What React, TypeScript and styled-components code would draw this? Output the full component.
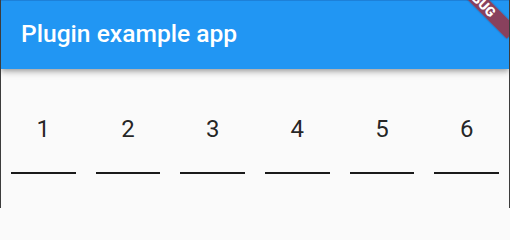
import styled, { createGlobalStyle } from "styled-components";
import type { FunctionComponent } from "react";

// Global page reset
const GlobalStyle = createGlobalStyle`
    html, body {
        margin: 0;
        padding: 0;
        background: #fafafa;
    }
    body {
        font-family: Roboto, "Noto Sans", "Liberation Sans", sans-serif;
    }
`;

// Define Styles
const Screen = styled.div`
    position: relative;
    width: 508px;
    height: 208px;
    overflow: hidden;
    border-left: 1px solid #3c3c3c;
    border-right: 1px solid #3c3c3c;
    background: #fafafa;
    display: flex;
    flex-direction: column;
`;
const AppBar = styled.header`
    position: relative;
    z-index: 1;
    flex-shrink: 0;
    height: 68px;
    border-top: 1px solid #1d80d8;
    background: #2196f3;
    box-shadow: 0 2px 4px -1px rgba(0, 0, 0, 0.2), 0 4px 5px 0 rgba(0, 0, 0, 0.14),
        0 1px 10px 0 rgba(0, 0, 0, 0.12);
    display: flex;
    align-items: center;
    padding: 0 20px;
`;
const Title = styled.h1`
    margin: 0 0 2px 0;
    color: #ffffff;
    font-size: 24.6px;
    font-weight: 500;
    line-height: 28px;
    letter-spacing: 0;
`;
const CodeRow = styled.section`
    display: flex;
    gap: 20px;
    padding: 46px 10px 0;
`;
const Field = styled.div`
    flex: 1;
    display: flex;
    flex-direction: column;
    align-items: center;
`;
const Digit = styled.span`
    font-size: 24px;
    line-height: 28px;
    color: rgba(0, 0, 0, 0.87);
`;
const Underline = styled.div`
    align-self: stretch;
    height: 2px;
    margin-top: 29px;
    background: #1a1a1a;
`;
// Flutter debug ribbon, centred on the clipped top-right corner
const DebugBanner = styled.div`
    position: absolute;
    z-index: 2;
    left: 429px;
    top: -8px;
    width: 96px;
    height: 15px;
    transform: rotate(45deg);
    background: rgba(183, 28, 28, 0.7);
    box-shadow: 0 0 2px rgba(0, 0, 0, 0.3);
    display: flex;
    align-items: center;
    justify-content: center;
    color: #ffffff;
    font-size: 13.5px;
    font-weight: 900;
    line-height: 1;
`;

const digits = [1, 2, 3, 4, 5, 6];

// Define Page
const App: FunctionComponent = () => {
    return (
        <>
            <GlobalStyle />
            <Screen>
                <AppBar>
                    <Title>Plugin example app</Title>
                </AppBar>
                <CodeRow>
                    {digits.map((d) => (
                        <Field key={d}>
                            <Digit>{d}</Digit>
                            <Underline />
                        </Field>
                    ))}
                </CodeRow>
                <DebugBanner>DEBUG</DebugBanner>
            </Screen>
        </>
    );
};
// Export Page
export default App;
